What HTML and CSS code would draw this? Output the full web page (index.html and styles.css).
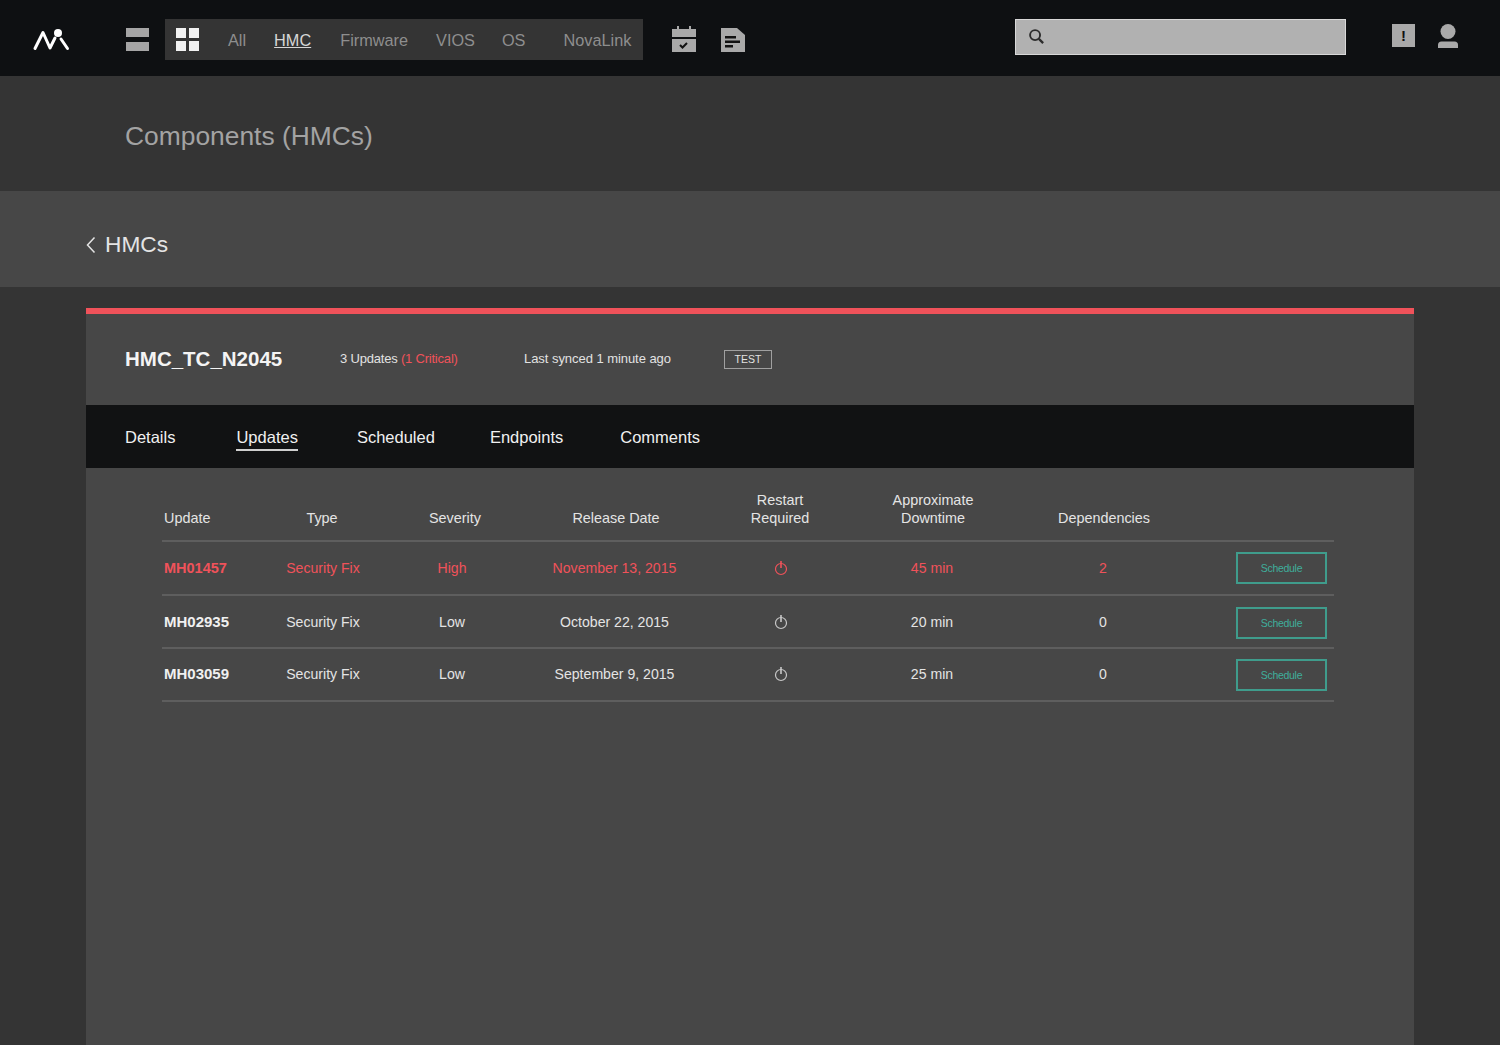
FILE: index.html
```html
<!DOCTYPE html>
<html lang="en">
<head>
<meta charset="utf-8">
<title>Components (HMCs)</title>
<link rel="stylesheet" href="styles.css">
</head>
<body>
<header class="topbar">
  <svg class="logo" viewBox="0 0 38 24" width="38" height="24"><path d="M3 21.500 L11 5.500 L18 21 L23 11" fill="none" stroke="#fff" stroke-width="3" stroke-linecap="round" stroke-linejoin="round"/><path d="M29 12 L35.500 21.500" fill="none" stroke="#fff" stroke-width="3" stroke-linecap="round"/><circle cx="26" cy="6" r="4" fill="#fff"/></svg>
  <span class="view-list"><i></i><i></i></span>
  <nav class="filter">
    <span class="view-grid"><i></i><i></i><i></i><i></i></span>
    <a class="f-all">All</a>
    <a class="f-hmc">HMC</a>
    <a class="f-fw">Firmware</a>
    <a class="f-vios">VIOS</a>
    <a class="f-os">OS</a>
    <a class="f-nova">NovaLink</a>
  </nav>
  <svg class="ic-cal" viewBox="0 0 24 26" width="24" height="26"><path d="M0 3h5V0h2v3h10V0h2v3h5v8H0z M0 13h24v13H0z" fill="#a9a9a9"/><path d="M8 19l2.500 2.500L15 17" fill="none" stroke="#111" stroke-width="2"/></svg>
  <svg class="ic-doc" viewBox="0 0 24 24" width="24" height="24"><path d="M0 0h16l8 7v17H0z" fill="#a9a9a9"/><path d="M4 8h11v2.500H4z M4 12.500h15V15H4z M4 17h8v2.500H4z" fill="#111"/></svg>
  <div class="search"><svg viewBox="0 0 18 18" width="17" height="17"><circle cx="7.500" cy="7.500" r="5.300" fill="none" stroke="#2c2c2c" stroke-width="2"/><path d="M11.500 11.500L16 16" stroke="#2c2c2c" stroke-width="2.400"/></svg></div>
  <span class="alert">!</span>
  <svg class="ic-user" viewBox="0 0 20 24" width="20" height="24"><circle cx="10" cy="7.500" r="7.500" fill="#a9a9a9"/><path d="M0 24v-3q0-3.500 3.500-3.500h13q3.500 0 3.500 3.500v3z" fill="#a9a9a9"/></svg>
</header>

<section class="title-band"><h1>Components (HMCs)</h1></section>

<section class="back-band">
  <svg viewBox="0 0 10 18" width="10" height="18"><path d="M8.500 1.500L1.500 9l7 7.500" fill="none" stroke="#e4e4e4" stroke-width="1.500"/></svg>
  <span>HMCs</span>
</section>

<main class="card">
  <div class="card-head">
    <h2>HMC_TC_N2045</h2>
    <span class="updates">3 Updates <em>(1 Critical)</em></span>
    <span class="synced">Last synced 1 minute ago</span>
    <span class="tag">TEST</span>
  </div>
  <nav class="tabs">
    <a class="t-details">Details</a>
    <a class="t-updates active">Updates</a>
    <a class="t-scheduled">Scheduled</a>
    <a class="t-endpoints">Endpoints</a>
    <a class="t-comments">Comments</a>
  </nav>
  <div class="table">
    <div class="thead">
      <span class="left">Update</span><span>Type</span><span>Severity</span><span>Release Date</span><span>Restart<br>Required</span><span>Approximate<br>Downtime</span><span>Dependencies</span>
    </div>
    <div class="row critical">
      <b>MH01457</b><span>Security Fix</span><span>High</span><span>November 13, 2015</span>
      <span><svg class="power" viewBox="0 0 14 16" width="14" height="16"><circle cx="7" cy="9" r="5.500" fill="none" stroke="currentColor" stroke-width="1.200"/><path d="M7 1v7" stroke="currentColor" stroke-width="1.600"/></svg></span>
      <span>45 min</span><span>2</span><span class="act"><a class="btn">Schedule</a></span>
    </div>
    <div class="row row-second">
      <b>MH02935</b><span>Security Fix</span><span>Low</span><span>October 22, 2015</span>
      <span><svg class="power" viewBox="0 0 14 16" width="14" height="16"><circle cx="7" cy="9" r="5.500" fill="none" stroke="currentColor" stroke-width="1.200"/><path d="M7 1v7" stroke="currentColor" stroke-width="1.600"/></svg></span>
      <span>20 min</span><span>0</span><span class="act"><a class="btn">Schedule</a></span>
    </div>
    <div class="row row-third">
      <b>MH03059</b><span>Security Fix</span><span>Low</span><span>September 9, 2015</span>
      <span><svg class="power" viewBox="0 0 14 16" width="14" height="16"><circle cx="7" cy="9" r="5.500" fill="none" stroke="currentColor" stroke-width="1.200"/><path d="M7 1v7" stroke="currentColor" stroke-width="1.600"/></svg></span>
      <span>25 min</span><span>0</span><span class="act"><a class="btn">Schedule</a></span>
    </div>
  </div>
</main>
</body>
</html>
```
FILE: styles.css
```css
* { box-sizing: border-box; }
html, body { margin: 0; height: 1045px; overflow: hidden; }
body { background: #343434; font-family: "Liberation Sans", Arial, sans-serif; color: #e6e6e6; }

.topbar { height: 76px; background: #0e1012; display: flex; align-items: center; }
.logo { margin-left: 32px; margin-top: 1px; flex: none; }
.view-list { margin-left: 56px; width: 23px; height: 23px; display: flex; flex-direction: column; justify-content: space-between; margin-top: 2px; }
.view-list i { display: block; height: 9px; background: #a5a5a5; }
.filter { margin-left: 16px; margin-top: 3px; width: 478px; height: 41px; background: #343434; display: flex; align-items: center; font-size: 16.300px; line-height: 20px; color: #8e8e8e; }
.filter a { margin-top: 1px; }
.view-grid { margin-left: 11px; width: 23px; height: 23px; display: grid; grid-template-columns: 10px 10px; grid-auto-rows: 10px; gap: 3px; }
.view-grid i { display: block; background: #f2f2f2; }
.filter .f-all { margin-left: 29px; }
.filter .f-hmc { margin-left: 28px; color: #d6d6d6; text-decoration: underline; }
.filter .f-fw { margin-left: 29px; }
.filter .f-vios { margin-left: 28px; }
.filter .f-os { margin-left: 27px; }
.filter .f-nova { margin-left: 38px; }
.ic-cal { margin-left: 29px; margin-top: 1px; flex: none; }
.ic-doc { margin-left: 25px; margin-top: 3px; flex: none; }
.search { margin-left: 270px; margin-top: -3px; width: 331px; height: 36px; background: #b1b1b1; border: 1px solid #d8d8d8; display: flex; align-items: center; padding-left: 12px; }
.alert { margin-left: 46px; margin-top: -5px; width: 23px; height: 23px; background: #a9a9a9; color: #111; font-size: 15px; font-weight: 700; display: flex; align-items: center; justify-content: center; }
.ic-user { margin-left: 23px; margin-top: -5px; flex: none; }

.title-band { height: 115px; background: #343434; padding-left: 125px; padding-top: 12px; display: flex; align-items: center; }
h1 { margin: 0 0 6px; font-size: 26.400px; font-weight: 400; color: #a3a3a3; }

.back-band { height: 96px; background: #474747; padding-left: 86px; padding-top: 12px; padding-bottom: 1px; display: flex; align-items: center; gap: 9px; font-size: 22.700px; color: #e4e4e4; }
.back-band svg { margin-top: 1px; }

.card { margin: 21px 86px 0; height: 737px; background: #474747; border-top: 6px solid #f0525a; }
.card-head { height: 91px; display: flex; align-items: center; padding-left: 39px; padding-bottom: 2px; font-size: 13px; color: #e2e2e2; }
h2 { margin: 0; width: 215px; font-size: 20.500px; font-weight: 700; color: #f4f4f4; }
.updates { width: 184px; letter-spacing: -0.200px; }
.updates em { font-style: normal; color: #f0525a; }
.synced { width: 200px; letter-spacing: -0.050px; }
.tag { width: 48px; height: 19px; margin-top: 1px; border: 1px solid #a0a0a0; font-size: 10.500px; display: flex; align-items: center; justify-content: center; }

.tabs { height: 63px; background: #111213; display: flex; align-items: center; padding-left: 39px; font-size: 16.500px; color: #f0f0f0; }
.tabs a { display: block; padding: 6px 0 5px; border-bottom: 1px solid transparent; margin-top: 2px; }
.tabs .active { border-bottom: 2px solid #cfcfcf; padding-bottom: 2px; margin-bottom: 2px; }
.t-updates { margin-left: 61px; }
.t-scheduled { margin-left: 59px; }
.t-endpoints { margin-left: 55px; }
.t-comments { margin-left: 57px; }

.table { margin: 0 80px 0 76px; font-size: 14.100px; color: #e4e4e4; }
.thead, .row { display: grid; align-items: center; text-align: center; }
.thead { grid-template-columns: 100px 120px 146px 176px 152px 154px 188px 136px; height: 74px; align-items: end; padding-bottom: 13px; font-size: 14.400px; line-height: 18px; border-bottom: 2px solid #5e5e5e; }
.thead .left { text-align: left; padding-left: 2px; }
.row { grid-template-columns: 100px 122px 136px 189px 144px 158px 184px 139px; height: 53px; border-bottom: 2px solid #5e5e5e; }
.row b { text-align: left; padding-left: 2px; font-size: 15px; color: #f0f0f0; }
.critical { height: 54px; color: #f0525a; }
.critical b { font-size: 14.500px; color: #f0525a; }
.row-third { padding-bottom: 2px; }
.row-second .btn, .row-third .btn { margin-top: 2px; }
.power { display: block; margin: 0 auto; color: #c8c8c8; }
.critical .power { color: #f0525a; }
.act { display: flex; justify-content: flex-end; padding-right: 7px; }
.btn { width: 91px; height: 32px; border: 2px solid #3f9c8c; color: #3fae9c; font-size: 10.500px; display: flex; align-items: center; justify-content: center; letter-spacing: -0.300px; }
```
